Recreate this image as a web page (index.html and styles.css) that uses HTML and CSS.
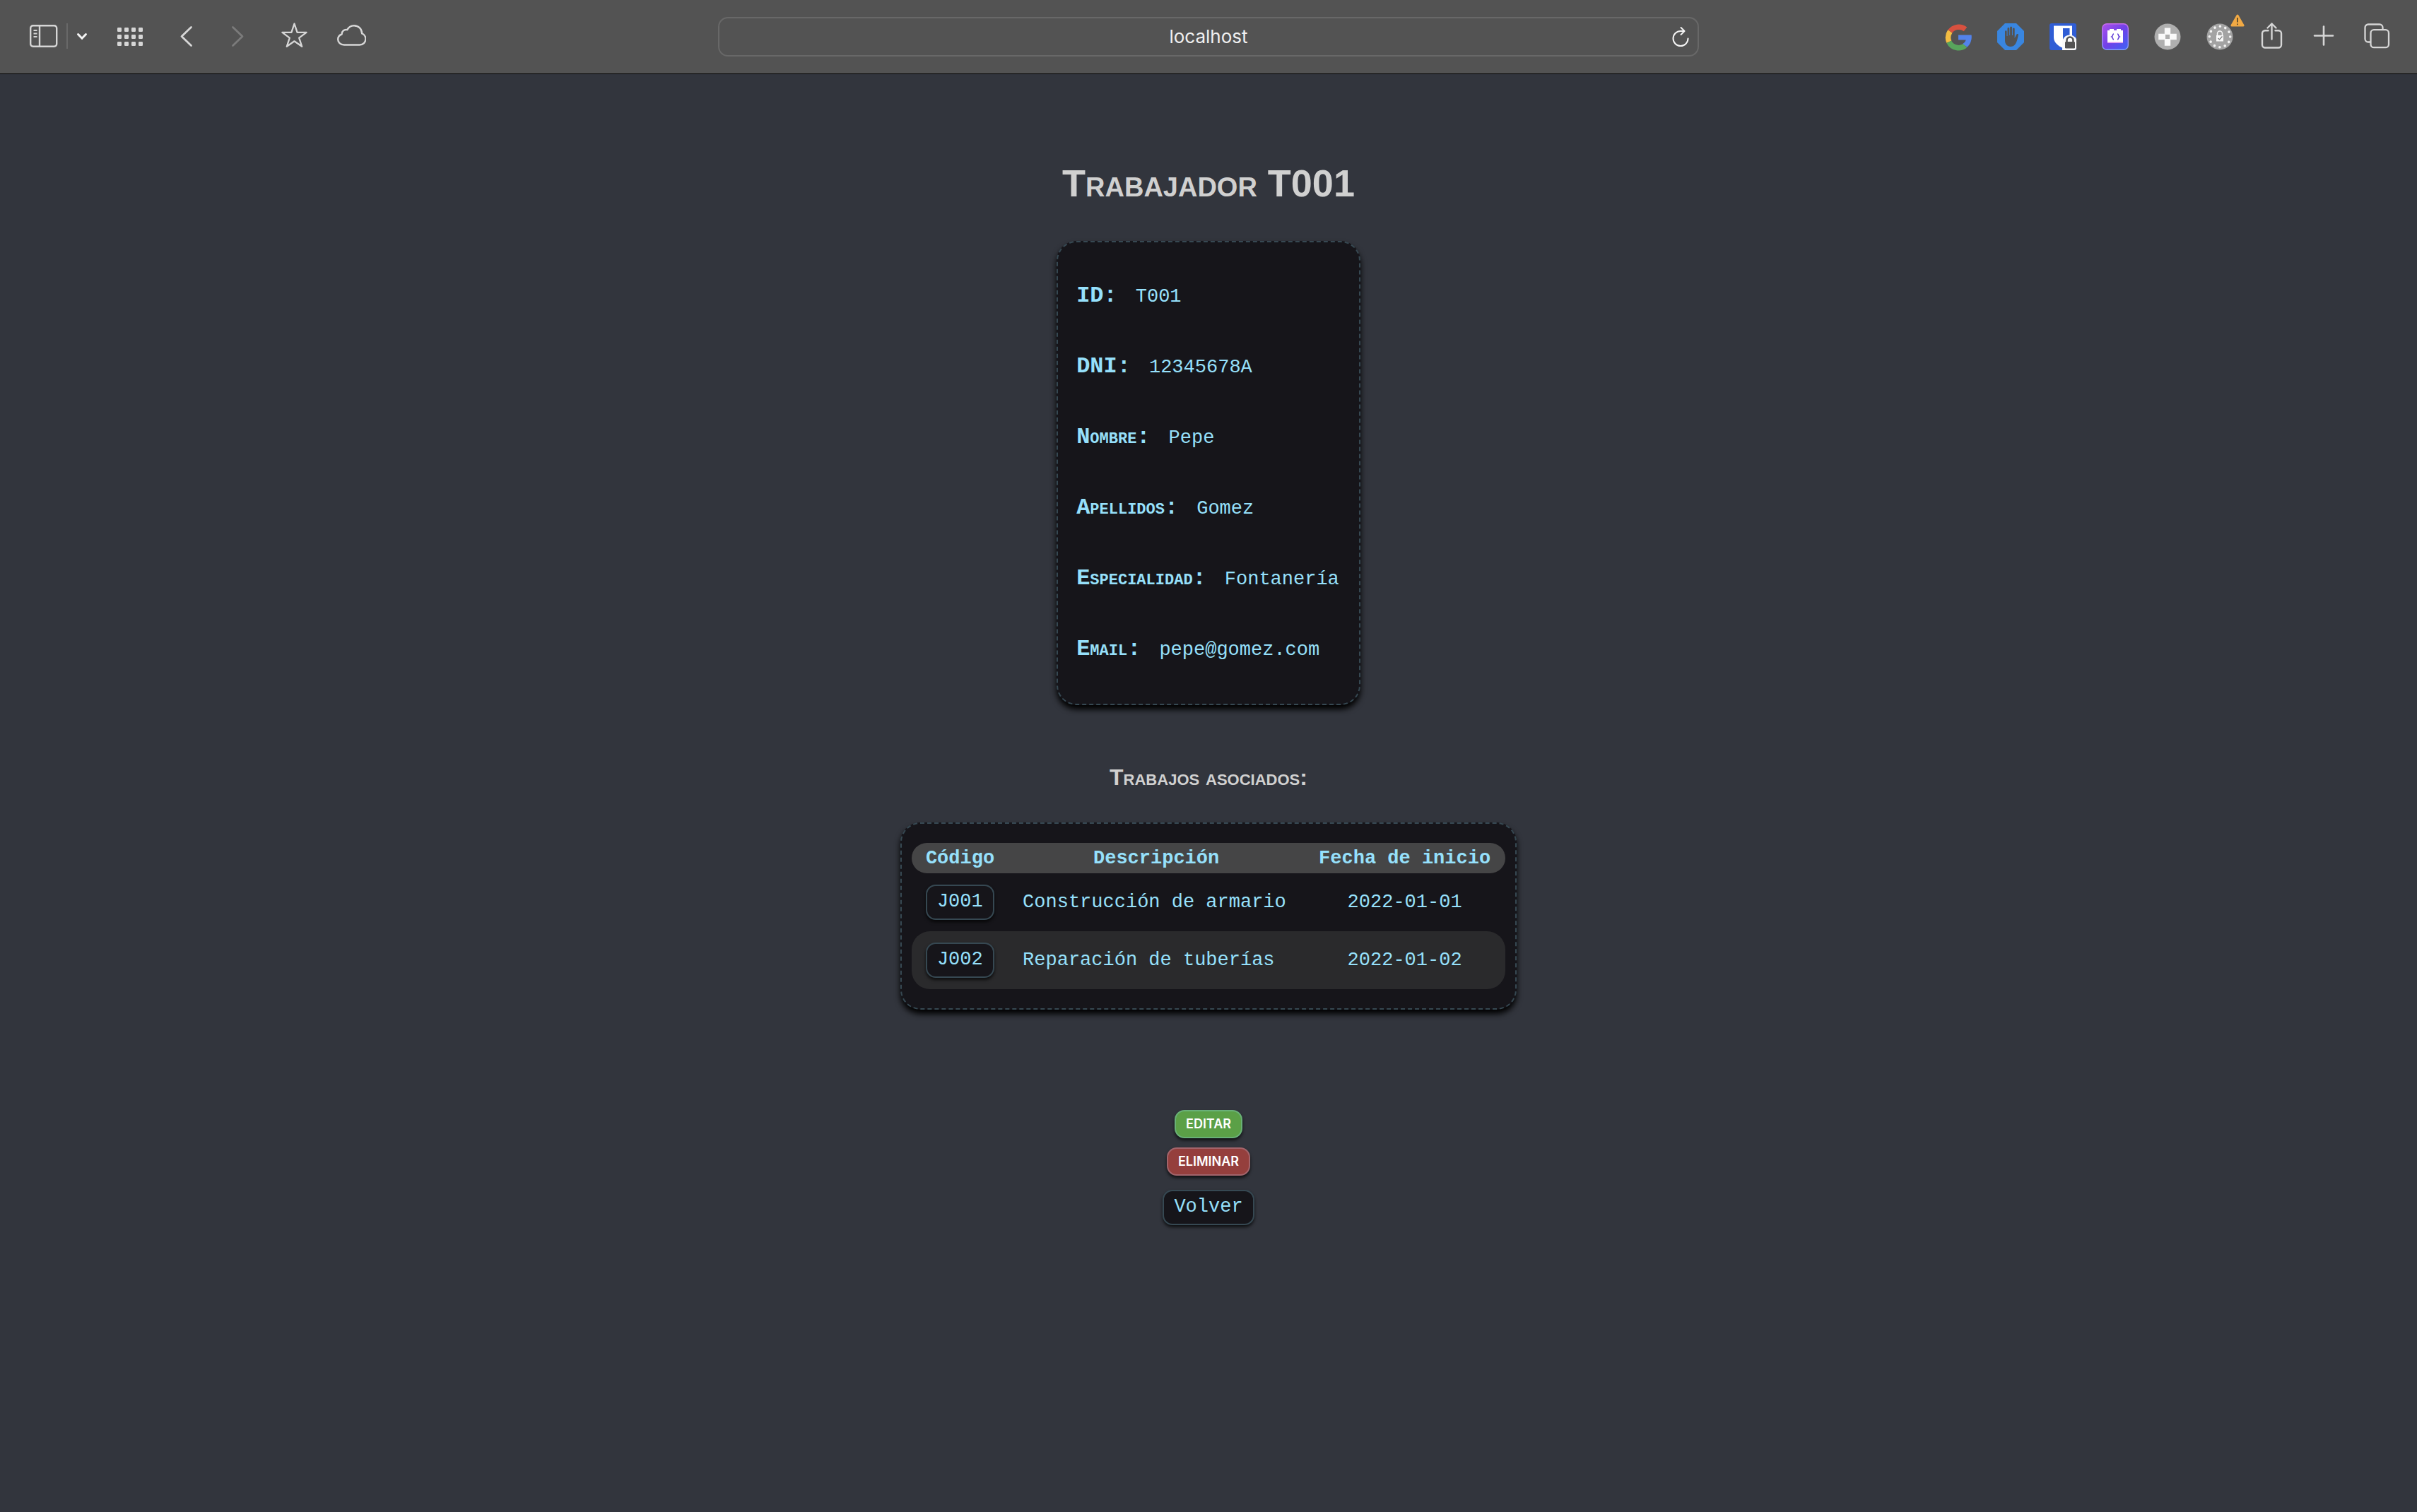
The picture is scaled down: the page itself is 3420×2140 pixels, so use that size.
FILE: index.html
```html
<!DOCTYPE html>
<html lang="es">
<head>
<meta charset="utf-8">
<meta name="viewport" content="width=device-width, initial-scale=1">
<title>Trabajador T001</title>
<link rel="stylesheet" href="styles.css">
</head>
<body>
<header class="toolbar">
  <div class="tools tools-left">
    <div class="tool-group tool-group-tight">
      <button class="tool" type="button" aria-label="Barra lateral">
        <svg width="40" height="40" viewBox="0 0 40 40"><g fill="none" stroke="currentColor" stroke-width="2.4"><rect x="1.2" y="5.2" width="37" height="29.5" rx="3.5"/><path d="M14 5v30"/><path d="M5.5 12h5M5.5 16.5h5M5.5 21h5" stroke-width="1.8"/></g></svg>
      </button>
      <span class="divider"></span>
      <button class="tool" type="button" aria-label="Grupos de pestañas">
        <svg class="bright" width="16" height="40" viewBox="0 0 16 40"><path d="M2.5 17.500l5.500 5.800 5.500-5.800" fill="none" stroke="currentColor" stroke-width="3" stroke-linecap="round" stroke-linejoin="round"/></svg>
      </button>
    </div>
    <button class="tool" type="button" aria-label="Favoritos">
      <svg width="40" height="40" viewBox="0 0 40 40" fill="currentColor"><g id="dots"><rect x="2" y="8" width="6" height="6" rx="1.200"/><rect x="12" y="8" width="6" height="6" rx="1.200"/><rect x="22" y="8" width="6" height="6" rx="1.200"/><rect x="32" y="8" width="6" height="6" rx="1.200"/></g><use href="#dots" y="10"/><use href="#dots" y="20"/></svg>
    </button>
    <div class="tool-group">
      <button class="tool" type="button" aria-label="Atrás">
        <svg width="40" height="40" viewBox="0 0 40 40"><path d="M26.500 7.500L13 20.500l13.500 13" fill="none" stroke="currentColor" stroke-width="2.800" stroke-linecap="round" stroke-linejoin="round"/></svg>
      </button>
      <button class="tool" type="button" aria-label="Adelante" disabled>
        <svg width="40" height="40" viewBox="0 0 40 40"><path d="M13.500 7.500L27 20.500l-13.500 13" fill="none" stroke="currentColor" stroke-width="2.800" stroke-linecap="round" stroke-linejoin="round"/></svg>
      </button>
    </div>
    <button class="tool" type="button" aria-label="Añadir a favoritos">
      <svg width="40" height="40" viewBox="0 0 40 40"><path d="M20.500 2.500l4.100 12.300h13L27.200 22.600l4 12.200-10.700-7.500-10.700 7.500 4-12.200L3.400 14.800h13z" fill="none" stroke="currentColor" stroke-width="2.300" stroke-linejoin="round"/></svg>
    </button>
    <button class="tool" type="button" aria-label="Pestañas de iCloud">
      <svg width="42" height="40" viewBox="0 0 42 40"><path d="M11 32.500C5.500 32.500 2.200 29 2.200 24.800c0-3.600 2.200-6.200 5.400-7.300 0-4.500 3.700-7.300 7.700-6.300 2-3.800 5.500-6 9.700-6 6.300 0 11 4.700 11.200 11.200 3.300 1.400 5.200 4.200 5.200 7.700 0 4.700-3.700 8.400-8.600 8.400z" fill="none" stroke="currentColor" stroke-width="2.400" stroke-linejoin="round"/></svg>
    </button>
  </div>

  <form class="address">
    <input class="address-input" type="text" value="localhost" aria-label="Dirección">
    <button class="tool bright" type="button" aria-label="Recargar">
      <svg width="24" height="32" viewBox="0 0 24 32"><g fill="none" stroke="currentColor" stroke-width="2" stroke-linecap="round" stroke-linejoin="round"><path d="M22.500 18.500A10.500 10.500 0 1 1 12 8h5"/><path d="M12.500 3l5 5-5 5"/></g></svg>
    </button>
  </form>

  <div class="tools tools-right">
    <button class="tool" type="button" aria-label="Google">
      <svg width="38" height="40" viewBox="0 0 38 40"><g fill="none" stroke-width="7.500"><path d="M7.300 12.500A15.300 15.300 0 0 1 29 9.400" stroke="#d8513f"/><path d="M5.800 27.200a15.300 15.300 0 0 1 1.500-14.700" stroke="#f3bd42"/><path d="M28.800 32.500A15.300 15.300 0 0 1 5.800 27.200" stroke="#58a55c"/></g><path d="M19 17.500h18.600c.9 6.500-1.300 13-6.200 17.300l-6-4.800c2.300-1.500 3.700-3.300 4.300-5.500H19z" fill="#5383ec"/></svg>
    </button>
    <button class="tool" type="button" aria-label="Bloqueador de anuncios">
      <svg width="38" height="40" viewBox="0 0 38 40"><path d="M11 1h16l11 11v16L27 39H11L0 28V12z" fill="#3986e0"/><path d="M19 34c-5 0-8-3.500-8-9V12.500a1.300 1.300 0 0 1 2.600 0V19h.9V8.500a1.400 1.400 0 0 1 2.800 0V18h.8V7a1.500 1.500 0 0 1 3 0v11h.8V9a1.400 1.400 0 0 1 2.800 0v13l2.500-5c.8-1.600 3.200-1.200 2.600.8C28.500 23 27.500 34 19 34z" fill="#535353"/></svg>
    </button>
    <button class="tool" type="button" aria-label="Gestor de contraseñas">
      <svg width="38" height="40" viewBox="0 0 38 40"><rect y="1" width="38" height="38" rx="3" fill="#2f5dd5"/><path d="M6 4.500h26V21c0 7-6 12-13 15C12 33 6 28 6 21z" fill="#fff"/><path d="M19 8h9.500v13c0 4.500-4 8-9.500 10.500z" fill="#2f5dd5"/><path d="M18 39V28a10.500 10.500 0 0 1 20-4.500V36a3 3 0 0 1-3 3z" fill="#fafafa"/><rect x="22" y="27" width="14" height="9.500" rx="1.200" fill="#535353"/><path d="M24.500 28v-3a4.500 4.500 0 0 1 9 0v3" fill="none" stroke="#535353" stroke-width="2.600"/></svg>
    </button>
    <button class="tool" type="button" aria-label="Extensión de código">
      <svg width="38" height="40" viewBox="0 0 38 40"><defs><linearGradient id="violet" x1="0" y1="0" x2="1" y2="1"><stop offset="0" stop-color="#ad50ec"/><stop offset=".5" stop-color="#7041e8"/><stop offset="1" stop-color="#3c63f6"/></linearGradient><linearGradient id="violet-edge" x1="0" y1="0" x2="0" y2="1"><stop offset="0" stop-color="#c66bee"/><stop offset="1" stop-color="#829cf8"/></linearGradient></defs><rect x=".7" y="1.700" width="36.600" height="36.600" rx="6.500" fill="url(#violet)" stroke="url(#violet-edge)" stroke-width="1.400"/><path d="M8 11h3V9h6v2h4V9h6v2h3v17.500H8z" fill="#fff"/><path d="M8 28.300h22" stroke="#d993f0" stroke-width="1.500"/><path d="M17 16c-2 0-1 3-3 4 2 1 1 4 3 4M22 16c2 0 1 3 3 4-2 1-1 4-3 4" fill="none" stroke="#6542d8" stroke-width="1.600"/></svg>
    </button>
    <button class="tool" type="button" aria-label="Extensión de juegos">
      <svg width="38" height="40" viewBox="0 0 38 40"><circle cx="19" cy="20" r="18.500" fill="#afafaf"/><path d="M14.800 7.500h8.400v8.300h8.600v8.400h-8.600v8.600h-8.400v-8.600H6.200v-8.400h8.600z" fill="#fafafa"/><path d="M16 17h6v6h-6z" fill="#afafaf"/></svg>
    </button>
    <button class="tool tool-alert" type="button" aria-label="Privacidad">
      <svg width="38" height="40" viewBox="0 0 38 40"><circle cx="19" cy="20" r="18.500" fill="#a3a3a3"/><circle cx="19" cy="20" r="14.700" fill="none" stroke="#f4f4f4" stroke-width="3.600" stroke-linecap="round" stroke-dasharray=".01 7.687"/><rect x="14" y="18" width="10" height="8.500" fill="#fafafa"/><path d="M15.500 18v-2.500a3.500 3.500 0 0 1 7 0V18" fill="none" stroke="#fafafa" stroke-width="1.500"/><path d="M16.500 22l2 2 4-4.500" fill="none" stroke="#8a8a8a" stroke-width="1.500"/></svg>
      <svg class="alert-badge" width="20" height="18" viewBox="0 0 20 18"><path d="M10 2L18 16H2z" fill="#f1a944" stroke="#f1a944" stroke-width="3" stroke-linejoin="round"/><path d="M10 5v6.500M10 13.500v1.800" stroke="#5b4a2c" stroke-width="1.800"/></svg>
    </button>
    <button class="tool" type="button" aria-label="Compartir">
      <svg width="38" height="40" viewBox="0 0 38 40"><g fill="none" stroke="currentColor" stroke-width="2.400" stroke-linecap="round" stroke-linejoin="round"><path d="M13.500 11.200H9a4 4 0 0 0-4 4v16.300a4 4 0 0 0 4 4h19a4 4 0 0 0 4-4V15.200a4 4 0 0 0-4-4h-4.500"/><path d="M18.500 23.500V1.500M12.500 7.500l6-6 6 6"/></g></svg>
    </button>
    <button class="tool" type="button" aria-label="Pestaña nueva">
      <svg width="38" height="40" viewBox="0 0 38 40"><path d="M18 5.500v26M5 18.500h26" stroke="currentColor" stroke-width="2.600" stroke-linecap="round"/></svg>
    </button>
    <button class="tool" type="button" aria-label="Vista de pestañas">
      <svg width="38" height="40" viewBox="0 0 38 40"><g fill="none" stroke="currentColor" stroke-width="2.300"><path d="M10 27.500H7a4.500 4.500 0 0 1-4.500-4.500V7A4.500 4.500 0 0 1 7 2.500h16A4.500 4.500 0 0 1 27.500 7v3"/><rect x="10.500" y="10.200" width="25.500" height="25" rx="4.500"/></g></svg>
    </button>
  </div>
</header>

<main class="page">
  <h1 class="title">Trabajador T001</h1>

  <dl class="card details">
    <div class="detail"><dt>ID:</dt><dd>T001</dd></div>
    <div class="detail"><dt>DNI:</dt><dd>12345678A</dd></div>
    <div class="detail"><dt>Nombre:</dt><dd>Pepe</dd></div>
    <div class="detail"><dt>Apellidos:</dt><dd>Gomez</dd></div>
    <div class="detail"><dt>Especialidad:</dt><dd>Fontanería</dd></div>
    <div class="detail"><dt>Email:</dt><dd>pepe@gomez.com</dd></div>
  </dl>

  <h2 class="subtitle">Trabajos asociados:</h2>

  <section class="card jobs">
    <table class="jobs-table">
      <colgroup><col class="col-code"><col class="col-text"><col class="col-date"></colgroup>
      <thead>
        <tr><th scope="col">Código</th><th scope="col">Descripción</th><th scope="col">Fecha de inicio</th></tr>
      </thead>
      <tbody>
        <tr><td><a class="pill" href="#J001">J001</a></td><td>Construcción de armario</td><td class="date">2022-01-01</td></tr>
        <tr><td><a class="pill" href="#J002">J002</a></td><td>Reparación de tuberías</td><td class="date">2022-01-02</td></tr>
      </tbody>
    </table>
  </section>

  <div class="actions">
    <button class="action action-edit" type="button">EDITAR</button>
    <button class="action action-delete" type="button">ELIMINAR</button>
    <a class="pill back" href="#volver">Volver</a>
  </div>
</main>
</body>
</html>
```
FILE: styles.css
```css
:root {
  --page: #32353d;
  --panel: #16151a;
  --accent: #96e0fb;
  --edge: #364852;
  --heading: #d0d0d0;
}

* {
  box-sizing: border-box;
}

body {
  margin: 0;
  min-height: 100vh;
  background: var(--page);
  color: var(--accent);
  font-family: "Liberation Mono", "Courier New", monospace;
  font-size: 27px;
  line-height: 36px;
}

/* Browser toolbar */
.toolbar {
  display: grid;
  grid-template-columns: 254fr 347fr 254fr;
  align-items: center;
  height: 105px;
  background: #535353;
  border-bottom: 1px solid #000;
  color: #d6d6d6;
}

.tools,
.tool-group {
  display: flex;
  align-items: center;
}

.tools-left {
  gap: 40px;
  padding: 0 0 2px 42px;
}

.tools-right {
  gap: 36px;
  justify-content: flex-end;
  padding-right: 38px;
}

.tool-group {
  gap: 32px;
}

.tool-group-tight {
  gap: 12px;
}

.tool {
  position: relative;
  flex: none;
  padding: 0;
  border: 0;
  background: none;
  color: inherit;
}

.tool:disabled {
  color: #7b7b7b;
}

.tool svg {
  display: block;
}

.bright {
  color: #f4f4f4;
}

.tool .alert-badge {
  position: absolute;
  top: -12px;
  right: -16px;
}

.divider {
  width: 2px;
  height: 36px;
  background: #686868;
}

.address {
  display: flex;
  align-items: center;
  height: 56px;
  padding: 0 12px 0 36px;
  border: 2px solid #686868;
  border-radius: 14px;
}

.address-input {
  flex: 1;
  min-width: 0;
  padding: 0;
  border: 0;
  outline: 0;
  background: none;
  color: #f0f0f0;
  font: 26px/32px Inter, sans-serif;
  text-align: center;
}

/* Worker page */
.page {
  display: flex;
  flex-direction: column;
  align-items: center;
  padding: 122px 24px 48px;
}

.title,
.subtitle {
  margin: 0;
  color: var(--heading);
  font-family: "Liberation Sans", Arial, sans-serif;
  font-weight: bold;
  font-variant-caps: small-caps;
}

.title {
  margin-bottom: 50px;
  font-size: 54px;
  line-height: 64px;
}

.subtitle {
  margin: 82px 0 44px;
  font-size: 32px;
  line-height: 40px;
}

.card {
  margin: 0;
  background: var(--panel);
  border: 2px dashed var(--edge);
  border-radius: 28px;
  box-shadow: 0 6px 8px #000000;
}

.details {
  display: flex;
  flex-direction: column;
  gap: 63px;
  padding: 58px 28px 58px 26px;
}

.detail {
  display: flex;
  align-items: baseline;
  gap: 26px;
}

.detail dt {
  font-size: 32px;
  font-weight: bold;
  font-variant-caps: small-caps;
}

.detail dd {
  margin: 0;
}

.jobs {
  padding: 27px 14px;
}

.jobs-table {
  border-collapse: collapse;
}

.col-code {
  width: 137px;
}

.col-text {
  width: 418px;
}

.col-date {
  width: 285px;
}

.jobs-table th {
  height: 43px;
  padding: 0 20px;
  background: #454546;
}

.jobs-table td {
  height: 82px;
  padding: 0 20px;
}

.jobs-table .date {
  text-align: center;
}

.jobs-table tbody tr:nth-child(even) td {
  background: #2a2a2c;
}

.jobs-table th:first-child,
.jobs-table td:first-child {
  border-radius: 26px 0 0 26px;
}

.jobs-table th:last-child,
.jobs-table td:last-child {
  border-radius: 0 26px 26px 0;
}

.pill {
  display: block;
  padding: 4px 14px 6px;
  background: var(--panel);
  border: 2px solid var(--edge);
  border-radius: 14px;
  box-shadow: 0 3px 4px #000000b0;
  color: inherit;
  text-decoration: none;
}

.actions {
  display: flex;
  flex-direction: column;
  align-items: center;
  gap: 13px;
  margin-top: 142px;
}

.action {
  height: 40px;
  padding: 0 14px;
  border: 2px solid;
  border-radius: 14px;
  box-shadow: 0 3px 4px #000000b0;
  color: #fff;
  font: 600 18px/36px Inter, sans-serif;
}

.action-edit {
  background: #5ba047;
  border-color: #69b077;
}

.action-delete {
  background: #953f3d;
  border-color: #a2646b;
}

.back {
  margin-top: 7px;
}
```
